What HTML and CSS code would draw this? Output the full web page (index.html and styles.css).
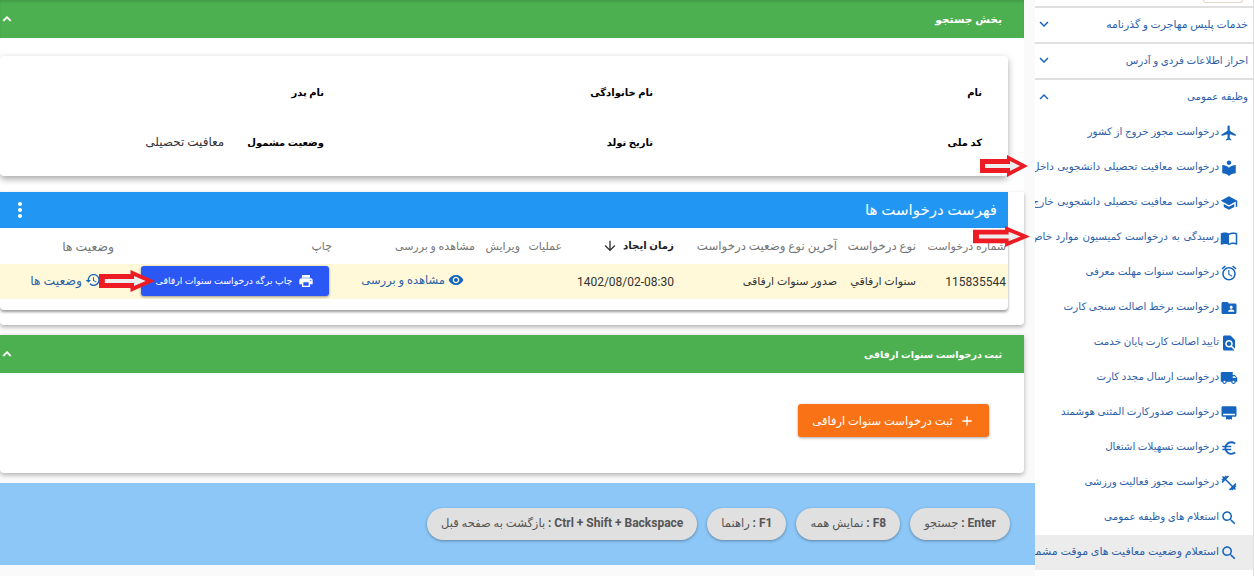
FILE: index.html
```html
<!DOCTYPE html>
<html lang="fa" dir="rtl">
<head>
  <meta charset="utf-8">
  <meta name="viewport" content="width=device-width, initial-scale=1">
  <title>سنوات ارفاقی</title>
  <link rel="stylesheet" href="styles.css">
</head>
<body>
<div class="page">
  <aside class="sidebar">
    <div class="avatarBar"><div class="avatarBit"></div></div>
    <div class="group">
      <span class="groupLong">خدمات پلیس مهاجرت و گذرنامه</span>
      <svg class="chev" viewBox="0 0 24 24"><path d="M16.59 8.59L12 13.17 7.41 8.59 6 10l6 6 6-6z"/></svg>
    </div>
    <div class="group">
      <span>احراز اطلاعات فردی و آدرس</span>
      <svg class="chev" viewBox="0 0 24 24"><path d="M16.59 8.59L12 13.17 7.41 8.59 6 10l6 6 6-6z"/></svg>
    </div>
    <div class="group open">
      <span>وظیفه عمومی</span>
      <svg class="chev" viewBox="0 0 24 24"><path d="M12 8l-6 6 1.41 1.41L12 10.83l4.59 4.58L18 14z"/></svg>
    </div>
    <ul class="subMenu">
      <li><svg viewBox="0 0 24 24"><path d="M21 16v-2l-8-5V3.5c0-.83-.67-1.5-1.5-1.5S10 2.67 10 3.5V9l-8 5v2l8-2.5V19l-2 1.5V22l3.5-1 3.5 1v-1.5L13 19v-5.5l8 2.5z"/></svg><span>درخواست مجوز خروج از کشور</span></li>
      <li class="clipped"><svg viewBox="0 0 24 24"><path d="M12 11.55C9.64 9.35 6.48 8 3 8v11c3.48 0 6.64 1.35 9 3.55 2.36-2.19 5.52-3.55 9-3.55V8c-3.48 0-6.64 1.35-9 3.55zM12 8c1.66 0 3-1.34 3-3s-1.34-3-3-3-3 1.34-3 3 1.34 3 3 3z"/></svg><span>درخواست معافیت تحصیلی دانشجویی داخل کشور</span></li>
      <li class="clipped"><svg viewBox="0 0 24 24"><path d="M5 13.18v4L12 21l7-3.82v-4L12 17l-7-3.82zM12 3L1 9l11 6 9-4.91V17h2V9L12 3z"/></svg><span>درخواست معافیت تحصیلی دانشجویی خارج از کشور</span></li>
      <li class="clipped"><svg viewBox="0 0 24 24"><path d="M21 5c-1.11-.35-2.33-.5-3.5-.5-1.95 0-4.05.4-5.5 1.5-1.45-1.1-3.55-1.5-5.5-1.5S2.45 4.9 1 6v14.65c0 .25.25.5.5.5.1 0 .15-.05.25-.05C3.1 20.45 5.05 20 6.5 20c1.95 0 4.05.4 5.5 1.5 1.35-.85 3.8-1.5 5.5-1.5 1.65 0 3.35.3 4.75 1.05.1.05.15.05.25.05.25 0 .5-.25.5-.5V6c-.6-.45-1.25-.8-2-1zm0 13.5c-1.1-.35-2.3-.5-3.5-.5-1.7 0-4.15.65-5.5 1.5V8c1.35-.85 3.8-1.5 5.5-1.5 1.2 0 2.4.15 3.5.5v11.5z"/></svg><span>رسیدگی به درخواست کمیسیون موارد خاص</span></li>
      <li><svg viewBox="0 0 24 24"><path d="M22 5.72l-4.6-3.86-1.29 1.53 4.6 3.86L22 5.72zM7.88 3.39L6.6 1.86 2 5.71l1.29 1.53 4.59-3.85zM12.5 8H11v6l4.75 2.85.75-1.23-4-2.37V8zM12 4c-4.97 0-9 4.03-9 9s4.03 9 9 9 9-4.03 9-9-4.03-9-9-9zm0 16c-3.87 0-7-3.13-7-7s3.13-7 7-7 7 3.13 7 7-3.13 7-7 7z"/></svg><span>درخواست سنوات مهلت معرفی</span></li>
      <li><svg viewBox="0 0 24 24"><path d="M20 6h-8l-2-2H4c-1.1 0-1.99.9-1.99 2L2 18c0 1.1.9 2 2 2h16c1.1 0 2-.9 2-2V8c0-1.1-.9-2-2-2zm-5 3c1.1 0 2 .9 2 2s-.9 2-2 2-2-.9-2-2 .9-2 2-2zm4 8h-8v-1c0-1.33 2.67-2 4-2s4 .67 4 2v1z"/></svg><span>درخواست برخط اصالت سنجی کارت</span></li>
      <li><svg viewBox="0 0 24 24"><path d="M20 19.59V8l-6-6H6c-1.1 0-1.99.9-1.99 2L4 20c0 1.1.89 2 1.99 2H18c.45 0 .85-.15 1.19-.4l-4.43-4.43c-.8.52-1.74.83-2.76.83-2.76 0-5-2.24-5-5s2.24-5 5-5 5 2.24 5 5c0 1.02-.31 1.96-.83 2.75L20 19.59zM9 13c0 1.66 1.34 3 3 3s3-1.34 3-3-1.34-3-3-3-3 1.34-3 3z"/></svg><span>تایید اصالت کارت پایان خدمت</span></li>
      <li><svg viewBox="0 0 24 24"><path d="M20 8h-3V4H3c-1.1 0-2 .9-2 2v11h2c0 1.66 1.34 3 3 3s3-1.34 3-3h6c0 1.66 1.34 3 3 3s3-1.34 3-3h2v-5l-3-4zM6 18.5c-.83 0-1.5-.67-1.5-1.5s.67-1.5 1.5-1.5 1.5.67 1.5 1.5-.67 1.5-1.5 1.5zm13.5-9l1.96 2.5H17V9.5h2.5zm-1.5 9c-.83 0-1.5-.67-1.5-1.5s.67-1.5 1.5-1.5 1.5.67 1.5 1.5-.67 1.5-1.5 1.5z"/></svg><span>درخواست ارسال مجدد کارت</span></li>
      <li><svg viewBox="0 0 24 24"><path d="M4 3h16c1.1 0 2 .9 2 2v10c0 1.1-.9 2-2 2h-4v4l-2-1-2 1-2-1-2 1v-4H4c-1.1 0-2-.9-2-2V5c0-1.1.9-2 2-2zm0 10v2h16v-2H4z"/></svg><span>درخواست صدورکارت المثنی هوشمند</span></li>
      <li><svg viewBox="0 0 24 24"><path d="M15 18.5c-2.51 0-4.68-1.42-5.76-3.5H15v-2H8.58c-.05-.33-.08-.66-.08-1s.03-.67.08-1H15V9H9.24C10.32 6.92 12.5 5.5 15 5.5c1.61 0 3.09.59 4.23 1.57L21 5.3C19.41 3.87 17.3 3 15 3c-3.92 0-7.24 2.51-8.48 6H3v2h3.06c-.04.33-.06.66-.06 1s.02.67.06 1H3v2h3.52c1.24 3.49 4.56 6 8.48 6 2.31 0 4.41-.87 6-2.3l-1.78-1.77c-1.13.98-2.6 1.57-4.22 1.57z"/></svg><span>درخواست تسهیلات اشتغال</span></li>
      <li><svg viewBox="0 0 24 24"><path d="M20.57 14.86L22 13.43 20.57 12 17 15.57 8.43 7 12 3.43 10.57 2 9.14 3.43 7.71 2 5.57 4.14 4.14 2.71 2.71 4.14l1.43 1.43L2 7.71l1.43 1.43L2 10.57 3.43 12 7 8.43 15.57 17 12 20.57 13.43 22l1.43-1.43L16.29 22l2.14-2.14 1.43 1.43 1.43-1.43-1.43-1.43L22 16.29z"/></svg><span>درخواست مجوز فعالیت ورزشی</span></li>
      <li><svg viewBox="0 0 24 24"><path d="M15.5 14h-.79l-.28-.27C15.41 12.59 16 11.11 16 9.5 16 5.91 13.09 3 9.5 3S3 5.91 3 9.5 5.91 16 9.5 16c1.61 0 3.09-.59 4.23-1.57l.27.28v.79l5 4.99L20.49 19l-4.99-5zm-6 0C7.01 14 5 11.99 5 9.5S7.01 5 9.5 5 14 7.01 14 9.5 11.99 14 9.5 14z"/></svg><span>استعلام های وظیفه عمومی</span></li>
      <li class="active"><svg viewBox="0 0 24 24"><path d="M15.5 14h-.79l-.28-.27C15.41 12.59 16 11.11 16 9.5 16 5.91 13.09 3 9.5 3S3 5.91 3 9.5 5.91 16 9.5 16c1.61 0 3.09-.59 4.23-1.57l.27.28v.79l5 4.99L20.49 19l-4.99-5zm-6 0C7.01 14 5 11.99 5 9.5S7.01 5 9.5 5 14 7.01 14 9.5 11.99 14 9.5 14z"/></svg><span>استعلام وضعیت معافیت های موقت مشمولان</span></li>
    </ul>
  </aside>

  <main class="content">
    <section class="panel searchPanel">
      <div class="panelHead">
        <span>بخش جستجو</span>
        <svg class="headChev" viewBox="0 0 24 24"><path d="M12 8l-6 6 1.41 1.41L12 10.83l4.59 4.58L18 14z"/></svg>
      </div>
      <div class="infoCard">
        <div class="infoRow">
          <div class="infoCell"><b>نام</b></div>
          <div class="infoCell"><b>نام خانوادگی</b></div>
          <div class="infoCell"><b>نام پدر</b></div>
        </div>
        <div class="infoRow">
          <div class="infoCell"><b>کد ملی</b></div>
          <div class="infoCell"><b>تاریخ تولد</b></div>
          <div class="infoCell"><b>وضعیت مشمول</b><span>معافیت تحصیلی</span></div>
        </div>
      </div>
    </section>

    <section class="listCard">
      <div class="listHead">
        <span>فهرست درخواست ها</span>
        <svg class="moreIcon" viewBox="0 0 24 24"><path d="M12 8c1.1 0 2-.9 2-2s-.9-2-2-2-2 .9-2 2 .9 2 2 2zm0 2c-1.1 0-2 .9-2 2s.9 2 2 2 2-.9 2-2-.9-2-2-2zm0 6c-1.1 0-2 .9-2 2s.9 2 2 2 2-.9 2-2-.9-2-2-2z"/></svg>
      </div>
      <div class="tableCard">
        <table class="requests">
          <colgroup>
            <col class="c1"><col class="c2"><col class="c3"><col class="c4"><col class="c5"><col class="c6"><col class="c7"><col class="c8"><col>
          </colgroup>
          <thead>
            <tr>
              <th>شماره درخواست</th>
              <th class="wide">نوع درخواست</th>
              <th class="wide">آخرین نوع وضعیت درخواست</th>
              <th class="sorted">زمان ایجاد <svg viewBox="0 0 24 24"><path d="M20 12l-1.41-1.41L13 16.17V4h-2v12.17l-5.58-5.59L4 12l8 8 8-8z"/></svg></th>
              <th>عملیات</th>
              <th>ویرایش</th>
              <th>مشاهده و بررسی</th>
              <th>چاپ</th>
              <th class="wide statusHead">وضعیت ها</th>
            </tr>
          </thead>
          <tbody>
            <tr>
              <td class="digits">115835544</td>
              <td>سنوات ارفاقي</td>
              <td>صدور سنوات ارفاقی</td>
              <td class="digits">1402/08/02-08:30</td>
              <td></td>
              <td></td>
              <td><a class="rowLink viewLink"><svg viewBox="0 0 24 24"><path d="M12 4.5C7 4.5 2.73 7.61 1 12c1.73 4.39 6 7.5 11 7.5s9.27-3.11 11-7.5c-1.73-4.39-6-7.5-11-7.5zM12 17c-2.76 0-5-2.24-5-5s2.24-5 5-5 5 2.24 5 5-2.24 5-5 5zm0-8c-1.66 0-3 1.34-3 3s1.34 3 3 3 3-1.34 3-3-1.34-3-3-3z"/></svg>مشاهده و بررسی</a></td>
              <td><button class="printBtn"><svg viewBox="0 0 24 24"><path d="M19 8H5c-1.66 0-3 1.34-3 3v6h4v4h12v-4h4v-6c0-1.66-1.34-3-3-3zm-3 11H8v-5h8v5zm3-7c-.55 0-1-.45-1-1s.45-1 1-1 1 .45 1 1-.45 1-1 1zm-1-9H6v4h12V3z"/></svg>چاپ برگه درخواست سنوات ارفاقی</button></td>
              <td><a class="rowLink statusLink"><svg viewBox="0 0 24 24"><path d="M13 3c-4.97 0-9 4.03-9 9H1l3.89 3.89.07.14L9 12H6c0-3.87 3.13-7 7-7s7 3.13 7 7-3.13 7-7 7c-1.93 0-3.68-.79-4.94-2.06l-1.42 1.42C8.27 19.99 10.51 21 13 21c4.97 0 9-4.03 9-9s-4.03-9-9-9zm-1 5v5l4.28 2.54.72-1.21-3.5-2.08V8H12z"/></svg>وضعیت ها</a></td>
            </tr>
          </tbody>
        </table>
      </div>
    </section>

    <section class="panel addPanel">
      <div class="panelHead">
        <span>ثبت درخواست سنوات ارفاقی</span>
        <svg class="headChev" viewBox="0 0 24 24"><path d="M12 8l-6 6 1.41 1.41L12 10.83l4.59 4.58L18 14z"/></svg>
      </div>
      <div class="addBody">
        <button class="addBtn"><svg viewBox="0 0 24 24"><path d="M19 13h-6v6h-2v-6H5v-2h6V5h2v6h6v2z"/></svg>ثبت درخواست سنوات ارفاقی</button>
      </div>
    </section>

    <footer class="shortcuts">
      <span class="chip"><b>Enter :</b> جستجو</span>
      <span class="chip"><b>F8 :</b> نمایش همه</span>
      <span class="chip"><b>F1 :</b> راهنما</span>
      <span class="chip"><b>Ctrl + Shift + Backspace :</b> بازگشت به صفحه قبل</span>
    </footer>
  </main>
</div>

<!-- annotation arrows drawn over the screenshot -->
<svg class="arrow arrowOne" viewBox="0 0 48 22" preserveAspectRatio="none"><path d="M0 4h27V0l21 11-21 11v-4H0z"/><path class="arrowCore" d="M5 9h25V6l10 5-10 5v-3H5z"/></svg>
<svg class="arrow arrowTwo" viewBox="0 0 48 22" preserveAspectRatio="none"><path d="M0 4h27V0l21 11-21 11v-4H0z"/><path class="arrowCore" d="M5 9h25V6l10 5-10 5v-3H5z"/></svg>
<svg class="arrow arrowThree" viewBox="0 0 48 22" preserveAspectRatio="none"><path d="M0 4h27V0l21 11-21 11v-4H0z"/><path class="arrowCore" d="M5 9h25V6l10 5-10 5v-3H5z"/></svg>
</body>
</html>
```

FILE: styles.css
```css
* {
  box-sizing: border-box;
}
html, body {
  margin: 0;
  height: 576px;
  overflow: hidden;
}
body {
  position: relative;
  font-family: Roboto, "DejaVu Sans", sans-serif;
  font-size: 11px;
  background: #fafafa;
  color: #212121;
}
.page {
  display: flex;
  width: 1254px;
}

/* sidebar */
.sidebar {
  flex: 0 0 219px;
  width: 219px;
  height: 576px;
  background: #fff;
  border-right: 1px solid #e0e0e0;
  color: #2f5fa8;
  font-size: 10.3px;
  overflow: hidden;
}
.avatarBar {
  height: 8px;
  padding-right: 10px;
  border-bottom: 2px solid #e0e0e0;
}
.avatarBit {
  width: 40px;
  height: 3px;
  border: 1px solid #e2d8c8;
  border-top: 0;
  border-radius: 0 0 20px 20px;
}
.group {
  display: flex;
  align-items: center;
  justify-content: space-between;
  height: 36px;
  padding: 0 5px 2px 0;
  border-bottom: 2px solid #e0e0e0;
}
.group.open {
  height: 35px;
  border-bottom: 0;
}
.groupLong {
  font-size: 10.8px;
}
.chev {
  width: 18px;
  height: 18px;
  fill: #1565c0;
}
.subMenu {
  list-style: none;
  margin: 0;
  padding: 0;
}
.subMenu li {
  display: flex;
  align-items: center;
  gap: 1px;
  height: 35px;
  padding-right: 15px;
  white-space: nowrap;
  overflow: hidden;
}
.subMenu li span {
  margin-bottom: 3px;
}
.subMenu li.clipped {
  word-spacing: 1px;
}
.subMenu li svg {
  flex: none;
  width: 18px;
  height: 18px;
  fill: #1565c0;
}
.subMenu li.active {
  background: #ececec;
  font-size: 11px;
}

/* main column */
.content {
  flex: 0 0 1035px;
  width: 1035px;
  padding-right: 11px;
}
.panel {
  background: #fff;
  border-radius: 0 0 4px 4px;
  box-shadow: 0 2px 5px rgba(0, 0, 0, .3);
}
.panelHead {
  display: flex;
  align-items: center;
  justify-content: space-between;
  height: 38px;
  padding-right: 22px;
  background: #4caf50;
  color: #fff;
  font-size: 9.6px;
  font-weight: 700;
}
.headChev {
  width: 16px;
  height: 16px;
  margin-left: -1px;
  fill: #fff;
  stroke: #fff;
  stroke-width: 1;
}
.searchPanel {
  height: 192px;
  box-shadow: none;
}
.searchPanel .panelHead {
  font-size: 10.7px;
  box-shadow: inset 0 2px 2px rgba(0, 0, 0, .1);
}
.infoCard {
  width: 1008px;
  height: 120px;
  margin: 18px 16px 0 0;
  padding: 11px 26px 0 0;
  background: #fff;
  border-radius: 4px;
  box-shadow: 0 3px 7px rgba(0, 0, 0, .35);
}
.infoRow {
  display: flex;
  align-items: center;
  height: 50px;
}
.infoCell {
  flex: 0 0 329px;
  display: flex;
  align-items: center;
  gap: 23px;
  color: #000;
  font-size: 10px;
}
.infoCell span {
  font-size: 12px;
  color: #333;
}

/* request list */
.listCard {
  height: 133px;
  background: #fff;
  border-radius: 0 0 4px 4px;
  box-shadow: 0 2px 4px rgba(0, 0, 0, .3);
}
.listHead {
  display: flex;
  align-items: center;
  justify-content: space-between;
  width: 1008px;
  margin-right: 16px;
  height: 36px;
  padding: 0 11px 0 8px;
  background: #2196f3;
  color: #fff;
  font-size: 15px;
}
.moreIcon {
  width: 24px;
  height: 24px;
  fill: #fff;
}
.tableCard {
  width: 1008px;
  height: 82px;
  margin-right: 16px;
  border-radius: 0 0 4px 4px;
  box-shadow: 0 2px 3px rgba(0, 0, 0, .4);
}
.requests {
  width: 1008px;
  table-layout: fixed;
  border-collapse: collapse;
}
.c1 { width: 88px; }
.c2 { width: 79px; }
.c3 { width: 163px; }
.c4 { width: 112px; }
.c5 { width: 42px; }
.c6 { width: 45px; }
.c7 { width: 143px; }
.c8 { width: 219px; }
.requests th, .requests td {
  text-align: right;
  white-space: nowrap;
  overflow: hidden;
}
.requests th {
  height: 36px;
  padding: 0 4px 0 0;
  font-size: 11px;
  font-weight: 500;
  color: #757575;
}
.requests th:first-child {
  padding-right: 2px;
}
.requests th.wide {
  font-size: 11.8px;
}
.requests th.statusHead {
  padding-right: 3px;
  font-size: 12.4px;
}
.requests th.sorted {
  color: #212121;
  font-size: 10.2px;
  font-weight: 700;
}
.sorted svg {
  width: 16px;
  height: 16px;
  vertical-align: middle;
  fill: #333;
  margin-right: 3px;
}
.requests td {
  height: 35px;
  padding: 0 4px 0 0;
  background: #fff9d9;
  color: #333;
  font-size: 11px;
}
.requests td.digits {
  font-size: 12px;
}
.requests td:first-child {
  padding-right: 2px;
}
.rowLink {
  display: inline-flex;
  align-items: center;
  gap: 3px;
  color: #2f5fa8;
}
.rowLink svg {
  width: 16px;
  height: 16px;
  fill: #1565c0;
}
.viewLink {
  margin-right: 11px;
  font-size: 11.5px;
}
.statusLink {
  margin-right: 12px;
  font-size: 12.4px;
}
.printBtn {
  display: flex;
  align-items: center;
  justify-content: center;
  gap: 6px;
  width: 188px;
  height: 30px;
  margin: 0 3px 2px 0;
  border: 0;
  border-radius: 3px;
  background: #2b58f5;
  color: #fff;
  font: inherit;
  font-size: 9.4px;
  box-shadow: 0 1px 3px rgba(0, 0, 0, .4);
}
.printBtn svg {
  width: 16px;
  height: 16px;
  fill: #fff;
}

/* add panel */
.addPanel {
  margin-top: 10px;
  height: 138px;
}
.addBody {
  padding: 31px 35px 0 0;
}
.addBtn {
  display: flex;
  align-items: center;
  justify-content: center;
  gap: 6px;
  width: 191px;
  height: 33px;
  border: 0;
  border-radius: 3px;
  background: #f97316;
  color: #fff;
  font: inherit;
  font-size: 11.5px;
  box-shadow: 0 1px 3px rgba(0, 0, 0, .35);
}
.addBtn svg {
  width: 16px;
  height: 16px;
  fill: #fff;
}

/* shortcuts */
.shortcuts {
  display: flex;
  align-items: center;
  gap: 10px;
  width: 1035px;
  height: 82px;
  margin: 10px -11px 0 0;
  padding-right: 25px;
  background: #8cc7f7;
}
.chip {
  display: inline-block;
  height: 32px;
  line-height: 30px;
  padding: 0 14px;
  border-radius: 16px;
  background: #e0e0e0;
  color: #555;
  font-size: 11.5px;
  box-shadow: 0 1px 3px rgba(0, 0, 0, .35);
  white-space: nowrap;
}
.chip b {
  font-size: 12px;
  font-weight: 700;
}

/* red annotation arrows */
.arrow {
  position: absolute;
  fill: #ed1c24;
}
.arrowCore {
  fill: #eee;
}
.arrowOne {
  left: 980px;
  top: 155px;
  width: 48px;
  height: 22px;
}
.arrowTwo {
  left: 973px;
  top: 226px;
  width: 57px;
  height: 21px;
}
.arrowThree {
  left: 99px;
  top: 270px;
  width: 56px;
  height: 22px;
}
```
